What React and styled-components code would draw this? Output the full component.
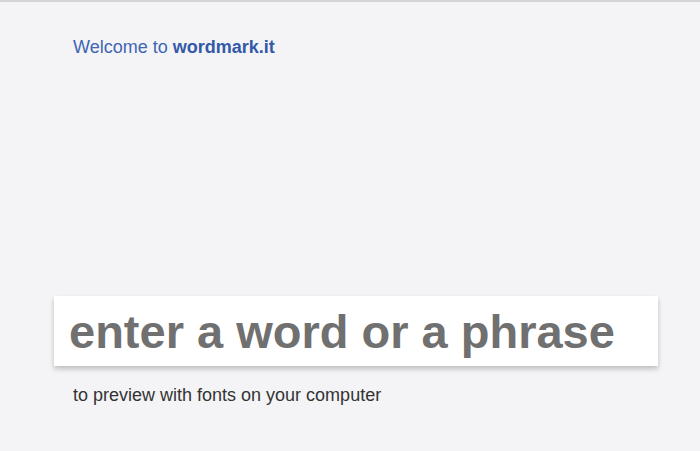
import React from 'react'
import styled, { createGlobalStyle } from 'styled-components'

const GlobalStyle = createGlobalStyle`
  html, body {
    margin: 0;
    padding: 0;
    background: #f4f4f6;
  }
  body {
    font-family: 'Liberation Sans', Arial, sans-serif;
  }
`

const Page = styled.div`
  height: 451px;
  box-sizing: border-box;
  border-top: 2px solid #d4d4d6;
  display: flex;
  flex-direction: column;
`

const Welcome = styled.div`
  padding: 35px 0 0 73px;
  font-size: 18px;
  color: #4065b5;
  line-height: 20px;

  strong {
    font-weight: bold;
    color: #3359a9;
  }
`

const Composer = styled.div`
  margin-top: auto;
  padding: 0 42px 45px 54px;
  display: flex;
  flex-direction: column;
  gap: 19px;
`

const InputBox = styled.input`
  box-sizing: border-box;
  width: 604px;
  height: 70px;
  border: none;
  outline: none;
  background: #fff;
  box-shadow: 0 3px 5px rgba(0, 0, 0, 0.22);
  padding: 0 15px;
  font-family: 'Liberation Sans', Arial, sans-serif;
  font-weight: bold;
  font-size: 47px;
  color: #707070;

  &::placeholder {
    color: #707070;
    opacity: 1;
  }
`

const Hint = styled.div`
  padding-left: 19px;
  font-size: 18px;
  line-height: 21px;
  color: #333;
`

const App = () => (
  <>
    <GlobalStyle />
    <Page>
      <Welcome>
        Welcome to <strong>wordmark.it</strong>
      </Welcome>
      <Composer>
        <InputBox placeholder="enter a word or a phrase" />
        <Hint>to preview with fonts on your computer</Hint>
      </Composer>
    </Page>
  </>
)

export default App
